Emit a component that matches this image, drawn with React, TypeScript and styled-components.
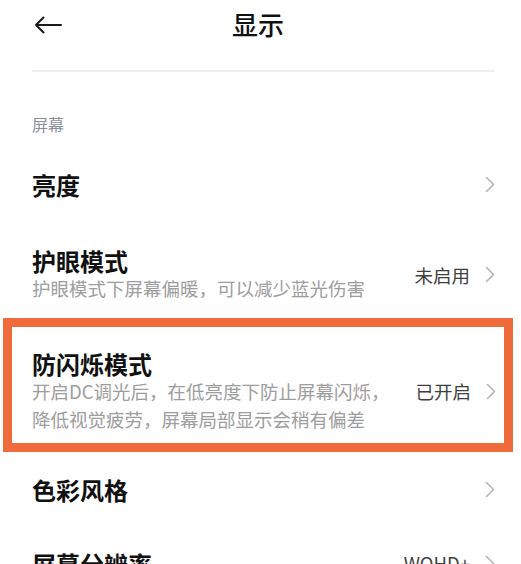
import { FC } from "react";
import styled, { createGlobalStyle } from "styled-components";

const GlobalStyle = createGlobalStyle`
  html, body {
    margin: 0;
    padding: 0;
    background: #ffffff;
  }
  body {
    font-family: "Noto Sans CJK SC", "Noto Sans", sans-serif;
    color: #111111;
    overflow: hidden;
  }
`;

// page shell
const Page = styled.div`
  width: 521px;
  padding: 0 26px 0 32px;
  box-sizing: border-box;
`;

const Header = styled.header`
  display: grid;
  grid-template-columns: 1fr auto 1fr;
  align-items: center;
  height: 48px;
  padding-right: 11px;
`;

const BackButton = styled.button`
  display: flex;
  align-items: center;
  justify-self: start;
  padding: 0 0 0 2px;
  margin-top: 2px;
  border: none;
  background: none;
  cursor: pointer;
`;

const Title = styled.h1`
  margin: 0;
  font-size: 26px;
  font-weight: 500;
  line-height: 34px;
  color: #111111;
`;

const Divider = styled.div`
  height: 2px;
  margin-top: 22px;
  background: #efefef;
`;

const SectionLabel = styled.div`
  margin-top: 42px;
  padding-bottom: 13px;
  font-size: 16px;
  line-height: 20px;
  color: #8a909a;
`;

const Row = styled.div<{ $top?: number; $bottom?: number }>`
  display: flex;
  align-items: center;
  gap: 16px;
  padding-top: ${(p) => p.$top ?? 23.5}px;
  padding-bottom: ${(p) => p.$bottom ?? 23.5}px;
`;

const Highlight = styled(Row)`
  margin: 0 -18px 0 -29px;
  padding-left: 20px;
  padding-right: 8px;
  border: 9px solid #ef6b3b;
`;

const Texts = styled.div`
  flex: 1;
  min-width: 0;
`;

const ItemTitle = styled.div`
  font-size: 24px;
  font-weight: 600;
  line-height: 27px;
  color: #111111;
`;

const ItemDesc = styled.div`
  font-size: 18.5px;
  line-height: 28px;
  color: #9d9d9d;
`;

const Trail = styled.div`
  display: flex;
  align-items: center;
  gap: 15px;
  flex-shrink: 0;
`;

const Value = styled.span`
  font-size: 18.5px;
  line-height: 24px;
  color: #3f3f3f;
`;

const Chevron: FC = () => (
  <svg width="10" height="17" viewBox="0 0 10 17" fill="none">
    <path d="M1.5 1.5 L8.5 8.5 L1.5 15.5" stroke="#b4b4b4" strokeWidth="1.6" strokeLinecap="round" strokeLinejoin="round" />
  </svg>
);

const BackArrow: FC = () => (
  <svg width="28" height="18" viewBox="0 0 28 18" fill="none">
    <path d="M2 9 H27 M9.5 1.5 L2 9 L9.5 16.5" stroke="#1a1a1a" strokeWidth="2" strokeLinecap="round" strokeLinejoin="round" />
  </svg>
);

export default function App() {
  return (
    <>
      <GlobalStyle />
      <Page>
        <Header>
          <BackButton aria-label="返回">
            <BackArrow />
          </BackButton>
          <Title>显示</Title>
          <span />
        </Header>
        <Divider />

        <SectionLabel>屏幕</SectionLabel>

        <Row>
          <Texts>
            <ItemTitle>亮度</ItemTitle>
          </Texts>
          <Trail>
            <Chevron />
          </Trail>
        </Row>

        <Row $top={26} $bottom={16}>
          <Texts>
            <ItemTitle>护眼模式</ItemTitle>
            <ItemDesc>护眼模式下屏幕偏暖，可以减少蓝光伤害</ItemDesc>
          </Texts>
          <Trail>
            <Value>未启用</Value>
            <Chevron />
          </Trail>
        </Row>

        <Highlight $top={22.5} $bottom={10.5}>
          <Texts>
            <ItemTitle>防闪烁模式</ItemTitle>
            <ItemDesc>
              开启DC调光后，在低亮度下防止屏幕闪烁，
              <br />
              降低视觉疲劳，屏幕局部显示会稍有偏差
            </ItemDesc>
          </Texts>
          <Trail>
            <Value>已开启</Value>
            <Chevron />
          </Trail>
        </Highlight>

        <Row>
          <Texts>
            <ItemTitle>色彩风格</ItemTitle>
          </Texts>
          <Trail>
            <Chevron />
          </Trail>
        </Row>

        <Row>
          <Texts>
            <ItemTitle>屏幕分辨率</ItemTitle>
          </Texts>
          <Trail>
            <Value>WQHD+</Value>
            <Chevron />
          </Trail>
        </Row>
      </Page>
    </>
  );
}
